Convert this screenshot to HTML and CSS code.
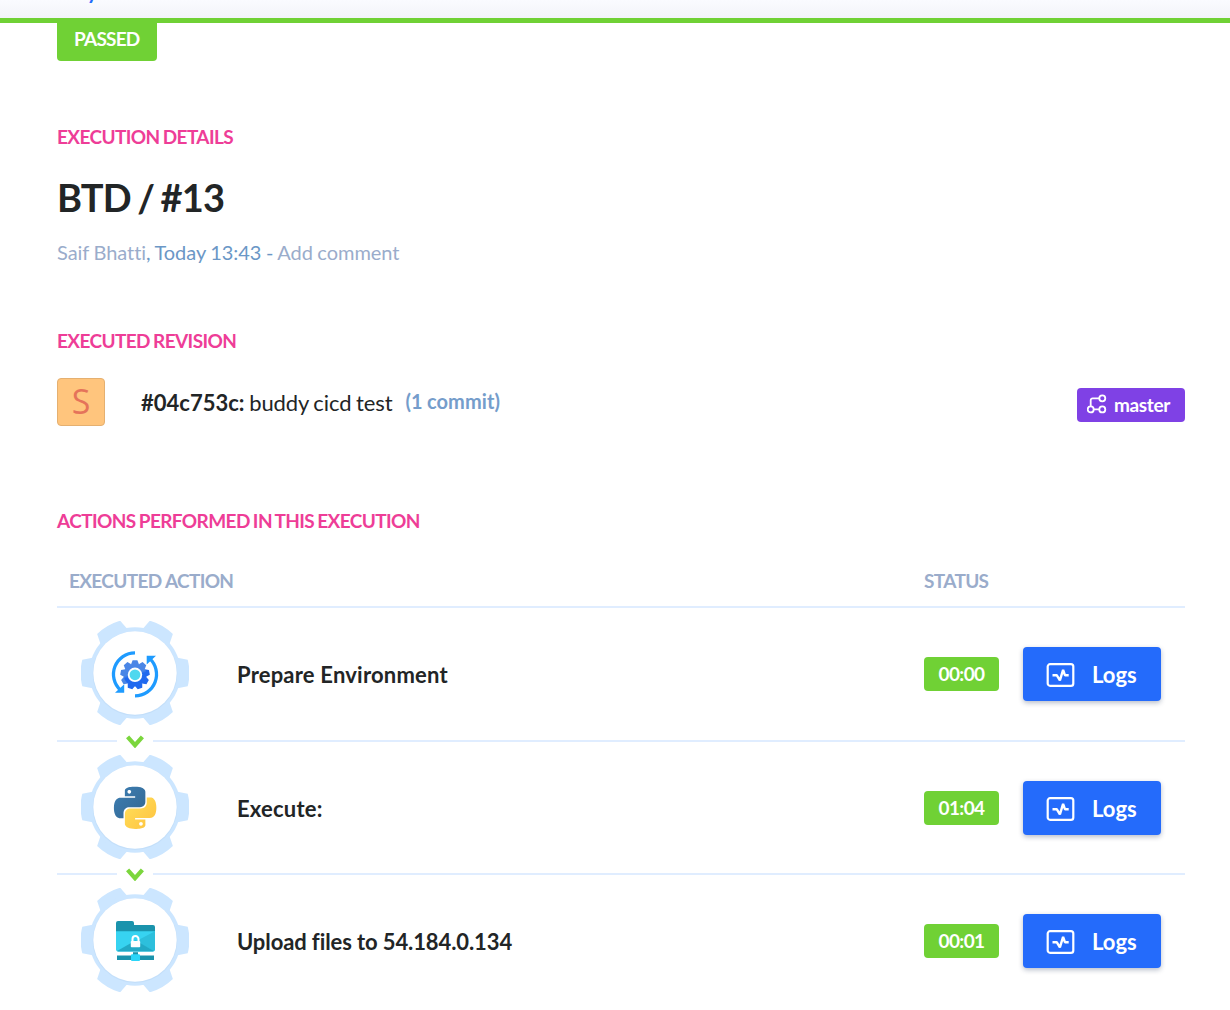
FILE: index.html
```
<!DOCTYPE html>
<html lang="en">
<head>
  <meta charset="UTF-8">
  <meta name="viewport" content="width=device-width, initial-scale=1.0">
  <title>BTD / #13</title>
  <link rel="stylesheet" href="styles.css">
</head>
<body>
  <!-- Shared icons -->
  <svg class="icon-defs" width="0" height="0">
    <defs>
      <linearGradient id="gear-blue" x1="0.3" y1="0" x2="0.6" y2="1">
        <stop offset="0.45" stop-color="#4a86e6"/>
        <stop offset="0.55" stop-color="#2069ef"/>
      </linearGradient>
      <linearGradient id="python-blue" x1="0" y1="0" x2="1" y2="1">
        <stop offset="0" stop-color="#3c7fb5"/>
        <stop offset="1" stop-color="#34668f"/>
      </linearGradient>
      <linearGradient id="python-yellow" x1="0" y1="0" x2="1" y2="1">
        <stop offset="0" stop-color="#ffe05c"/>
        <stop offset="1" stop-color="#ffc23d"/>
      </linearGradient>
      <path id="tooth" d="M40 -15.8 L52.7 -13.3 A54 54 0 0 1 52.7 13.3 L40 15.8 Z"/>
      <path id="cog-tooth" d="M-3.9 -10.5L-2.4 -14.6H2.4L3.9 -10.5z"/>
      <symbol id="gear" viewBox="0 0 108 104">
        <g transform="translate(54 52)" fill="#cce6ff">
          <use href="#tooth"/>
          <use href="#tooth" transform="rotate(60)"/>
          <use href="#tooth" transform="rotate(120)"/>
          <use href="#tooth" transform="rotate(180)"/>
          <use href="#tooth" transform="rotate(240)"/>
          <use href="#tooth" transform="rotate(300)"/>
          <circle r="45.7"/>
          <circle r="42.3" cy="0.6" fill="#c3dffa"/>
          <circle r="41.7" fill="#fff"/>
        </g>
      </symbol>
      <symbol id="logs" viewBox="0 0 28 24">
        <rect x="1.2" y="1.2" width="25.6" height="21.6" rx="2.4" fill="none" stroke="#fff" stroke-width="2.2"/>
        <path d="M6 12.2h4.2l3.2 5.2 3.2-10.6 1.8 5.4h3.8" fill="none" stroke="#fff" stroke-width="2.4" stroke-linejoin="bevel"/>
      </symbol>
      <symbol id="chevron" viewBox="0 0 18 13">
        <path d="M1.6 1.8L9 10.2l7.4-8.4" fill="none" stroke="#7bd63d" stroke-width="4.2"/>
      </symbol>
    </defs>
  </svg>

  <header class="topbar"><a class="topbar-link">y</a></header>

  <main class="page">
    <div class="result">PASSED</div>

    <h2 class="label">EXECUTION DETAILS</h2>
    <h1 class="title">BTD / #13</h1>
    <p class="meta"><span class="muted">Saif Bhatti</span>, Today 13:43 - <span class="muted">Add comment</span></p>

    <h2 class="label label-revision">EXECUTED REVISION</h2>
    <div class="revision">
      <div class="avatar">S</div>
      <div class="commit"><strong>#04c753c:</strong> <span class="message">buddy cicd test</span></div>
      <a class="count">(1 commit)</a>
      <div class="branch">
        <svg width="20" height="20" viewBox="0 0 20 20" fill="none" stroke="#fff" stroke-width="1.8">
          <circle cx="15.3" cy="4.3" r="3"/>
          <circle cx="3.7" cy="15.4" r="3"/>
          <circle cx="15.3" cy="15.4" r="3"/>
          <path d="M12.3 4.3H5.6a1.9 1.9 0 0 0-1.9 1.9v6.2M6.7 15.4h5.6"/>
        </svg>
        <span>master</span>
      </div>
    </div>

    <h2 class="label label-actions">ACTIONS PERFORMED IN THIS EXECUTION</h2>

    <!-- Actions table -->
    <div class="table-head">
      <span>EXECUTED ACTION</span>
      <span class="col-status">STATUS</span>
    </div>

    <div class="row">
      <div class="action-icon">
        <svg width="108" height="104" viewBox="0 0 108 104">
          <use href="#gear"/>
          <g fill="none" stroke="#1e9bff" stroke-width="3.3">
            <path d="M54 31.8A21.5 21.5 0 0 0 39.5 69.2"/>
            <path d="M54 74.8A21.5 21.5 0 0 0 68.5 37.4"/>
          </g>
          <path d="M34 71.8h9.2v-8.6zM75 34.7h-9.3v8.7z" fill="#1e9bff"/>
          <g transform="translate(54 53.8)">
            <g fill="#4a86e6">
              <use href="#cog-tooth"/>
              <use href="#cog-tooth" transform="rotate(240)"/>
              <use href="#cog-tooth" transform="rotate(280)"/>
              <use href="#cog-tooth" transform="rotate(320)"/>
              <use href="#cog-tooth" transform="rotate(40)"/>
            </g>
            <g fill="#2069ef">
              <use href="#cog-tooth" transform="rotate(80)"/>
              <use href="#cog-tooth" transform="rotate(120)"/>
              <use href="#cog-tooth" transform="rotate(160)"/>
              <use href="#cog-tooth" transform="rotate(200)"/>
            </g>
            <circle r="11.4" fill="url(#gear-blue)"/>
            <circle r="7.2" fill="#fff"/>
            <circle r="5.4" fill="#4fd8ef"/>
          </g>
        </svg>
      </div>
      <div class="name">Prepare Environment</div>
      <div class="time">00:00</div>
      <a class="logs"><svg width="29" height="24"><use href="#logs"/></svg>Logs</a>
      <div class="next"><svg width="18" height="13"><use href="#chevron"/></svg></div>
    </div>

    <div class="row">
      <div class="action-icon">
        <svg width="108" height="104" viewBox="0 0 108 104">
          <use href="#gear"/>
          <g transform="translate(33 31.7) scale(1.76)">
            <path fill="url(#python-blue)" d="M14.25.18l.9.2.73.26.59.3.45.32.34.34.25.34.16.33.1.3.04.26.02.2-.01.13V8.5l-.05.63-.13.55-.21.46-.26.38-.3.31-.33.25-.35.19-.35.14-.33.1-.3.07-.26.04-.21.02H8.77l-.69.05-.59.14-.5.22-.41.27-.33.32-.27.35-.2.36-.15.37-.1.35-.07.32-.04.27-.02.21v3.06H3.17l-.21-.03-.28-.07-.32-.12-.35-.18-.36-.26-.36-.36-.35-.46-.32-.59-.28-.73-.21-.88-.14-1.05-.05-1.23.06-1.22.16-1.04.24-.87.32-.71.36-.57.4-.44.42-.33.42-.24.4-.16.36-.1.32-.05.24-.01h.16l.06.01h8.16v-.83H6.18l-.01-2.75-.02-.37.05-.34.11-.31.17-.28.25-.26.31-.23.38-.2.44-.18.51-.15.58-.12.64-.1.71-.06.77-.04.84-.02 1.27.05zm-6.3 1.98l-.23.33-.08.41.08.41.23.34.33.22.41.09.41-.09.33-.22.23-.34.08-.41-.08-.41-.23-.33-.33-.22-.41-.09-.41.09z"/>
            <path fill="url(#python-yellow)" d="M21.04 6.11l.28.06.32.12.35.18.36.27.36.35.35.47.32.59.28.73.21.88.14 1.04.05 1.23-.06 1.23-.16 1.04-.24.86-.32.71-.36.57-.4.45-.42.33-.42.24-.4.16-.36.09-.32.05-.24.02-.16-.01h-8.22v.82h5.84l.01 2.76.02.36-.05.34-.11.31-.17.29-.25.25-.31.24-.38.2-.44.17-.51.15-.58.13-.64.09-.71.07-.77.04-.84.01-1.27-.04-1.07-.14-.9-.2-.73-.25-.59-.3-.45-.33-.34-.34-.25-.34-.16-.33-.1-.3-.04-.25-.02-.2.01-.13v-5.34l.05-.64.13-.54.21-.46.26-.38.3-.32.33-.24.35-.2.35-.14.33-.1.3-.06.26-.04.21-.02.13-.01h5.84l.69-.05.59-.14.5-.21.41-.28.33-.32.27-.35.2-.36.15-.36.1-.35.07-.32.04-.28.02-.21V6.07h2.09l.14.01zm-6.47 14.25l-.23.33-.08.41.08.41.23.33.33.23.41.08.41-.08.33-.23.23-.33.08-.41-.08-.41-.23-.33-.33-.23-.41-.08-.41.08z"/>
          </g>
        </svg>
      </div>
      <div class="name">Execute:</div>
      <div class="time">01:04</div>
      <a class="logs"><svg width="29" height="24"><use href="#logs"/></svg>Logs</a>
      <div class="next"><svg width="18" height="13"><use href="#chevron"/></svg></div>
    </div>

    <div class="row">
      <div class="action-icon">
        <svg width="108" height="104" viewBox="0 0 108 104">
          <use href="#gear"/>
          <path d="M35 45V35a2 2 0 0 1 2-2h14a2 2 0 0 1 2 2v2h19a2 2 0 0 1 2 2v6z" fill="#1a93ac"/>
          <path d="M35 43.2h39v18.3a2 2 0 0 1-2 2H37a2 2 0 0 1-2-2z" fill="#37d3f1"/>
          <path d="M74 43.2v18.3l-1 1.6L54.5 53.4z" fill="#2dbfdc"/>
          <path d="M36 63.1L54.5 52.5 73 63.1l-1 .4H37z" fill="#22a9c5"/>
          <path d="M51.5 53.5v-2.4a3 3 0 0 1 6 0v2.4" fill="none" stroke="#fff" stroke-width="2"/>
          <rect x="49.8" y="53" width="9.4" height="6.2" rx="0.8" fill="#fff"/>
          <path d="M52 64.2h5V67h-5z" fill="#1a93ac"/>
          <path d="M36 67.6h37V72H36z" fill="#1a93ac"/>
          <rect x="50" y="66.2" width="9" height="6.8" rx="1" fill="#2bd5f8"/>
        </svg>
      </div>
      <div class="name name-upload">Upload files to 54.184.0.134</div>
      <div class="time">00:01</div>
      <a class="logs"><svg width="29" height="24"><use href="#logs"/></svg>Logs</a>
    </div>
  </main>
</body>
</html>
```
FILE: styles.css
```
* {
  margin: 0;
  padding: 0;
  box-sizing: border-box;
}

body {
  font-family: Lato, sans-serif;
  background: #fff;
  color: #222526;
  height: 1010px;
  overflow: hidden;
}

.icon-defs {
  position: absolute;
}

/* Bottom edge of the top bar */
.topbar {
  height: 23px;
  padding-left: 87px;
  background: linear-gradient(#fafbff, #f3f4f9);
  border-bottom: 5px solid #70d135;
  overflow: hidden;
}

.topbar-link {
  display: block;
  margin-top: -21px;
  font-size: 20px;
  font-weight: 700;
  line-height: 24px;
  color: #236bfa;
}

.page {
  padding: 0 45px 0 57px;
}

.result {
  width: 100px;
  height: 38px;
  padding-left: 17px;
  background: #70d135;
  border-radius: 0 0 4px 4px;
  color: #fff;
  font-size: 19px;
  font-weight: 700;
  line-height: 31px;
  letter-spacing: -0.8px;
}

.label {
  margin-top: 64px;
  font-size: 19px;
  font-weight: 700;
  line-height: 24px;
  letter-spacing: -0.6px;
  word-spacing: -0.9px;
  color: #ee3d97;
}

.label-revision {
  margin-top: 65px;
}

.label-actions {
  margin-top: 83px;
}

.title {
  margin-top: 25px;
  font-size: 38px;
  font-weight: 700;
  line-height: 46px;
  letter-spacing: -0.9px;
  word-spacing: -1.8px;
}

.meta {
  margin-top: 20px;
  font-size: 20px;
  line-height: 24px;
  letter-spacing: -0.05px;
  word-spacing: -0.5px;
  color: #6b97c6;
}

.muted {
  color: #9aaccb;
}

/* Revision line */
.revision {
  display: flex;
  align-items: center;
  height: 48px;
  margin-top: 25px;
}

.avatar {
  width: 48px;
  height: 48px;
  margin-right: 36px;
  background: #ffc57d;
  border: 1px solid #e5b070;
  border-radius: 4px;
  color: #e5735a;
  font-family: "Open Sans", sans-serif;
  font-size: 34px;
  line-height: 44px;
  text-align: center;
}

.commit {
  font-size: 22px;
  line-height: 26px;
  padding-top: 1px;
  word-spacing: -0.9px;
}

.message {
  letter-spacing: -0.1px;
}

.count {
  margin: -2px 0 0 13px;
  font-size: 20px;
  font-weight: 700;
  letter-spacing: 0.1px;
  word-spacing: -0.8px;
  color: #759dcb;
}

.branch {
  display: flex;
  align-items: center;
  width: 108px;
  height: 34px;
  margin: 6px 0 0 auto;
  padding-left: 10px;
  background: #7f41e5;
  border-radius: 4px;
  color: #fff;
  font-size: 19px;
  font-weight: 700;
}

.branch svg {
  margin: -2px 7px 0 0;
}

.branch span {
  margin-top: -1px;
  letter-spacing: -0.35px;
}

/* Actions table */
.table-head {
  display: flex;
  height: 39px;
  margin-top: 36px;
  padding-left: 12px;
  border-bottom: 2px solid #e0edff;
  color: #9aaccb;
  font-size: 19px;
  font-weight: 700;
  line-height: 24px;
  letter-spacing: -0.65px;
}

.col-status {
  margin-left: auto;
  width: 261px;
}

.row {
  position: relative;
  display: flex;
  align-items: center;
  height: 134px;
  padding: 0 24px;
  border-bottom: 2px solid #e0edff;
}

.row + .row {
  height: 133px;
}

.row:last-child {
  border-bottom-color: transparent;
}

.action-icon {
  width: 108px;
  height: 104px;
  margin: -2px 48px 0 0;
}

.action-icon svg {
  display: block;
}

.name {
  flex: 1;
  font-size: 22px;
  font-weight: 700;
  letter-spacing: 0.2px;
  padding-top: 1px;
}

.name-upload {
  letter-spacing: -0.1px;
}

.time {
  width: 75px;
  height: 34px;
  margin-right: 24px;
  background: #70d135;
  border-radius: 4px;
  color: #fff;
  font-size: 19px;
  font-weight: 700;
  line-height: 34px;
  letter-spacing: -0.6px;
  text-align: center;
}

.logs {
  display: flex;
  align-items: center;
  width: 138px;
  height: 54px;
  padding: 1px 0 0 23px;
  background: #246bfb;
  border-radius: 4px;
  box-shadow: 0 2px 5px rgba(20, 40, 80, 0.3);
  color: #fff;
  font-size: 22px;
  font-weight: 700;
}

.logs svg {
  margin: 1px 17px 0 0;
}

/* Arrow that breaks the line between two actions */
.next {
  position: absolute;
  left: 60px;
  bottom: -8px;
  width: 36px;
  height: 13px;
  background: #fff;
  text-align: center;
}

.next svg {
  display: block;
  margin: 0 auto;
}
```
